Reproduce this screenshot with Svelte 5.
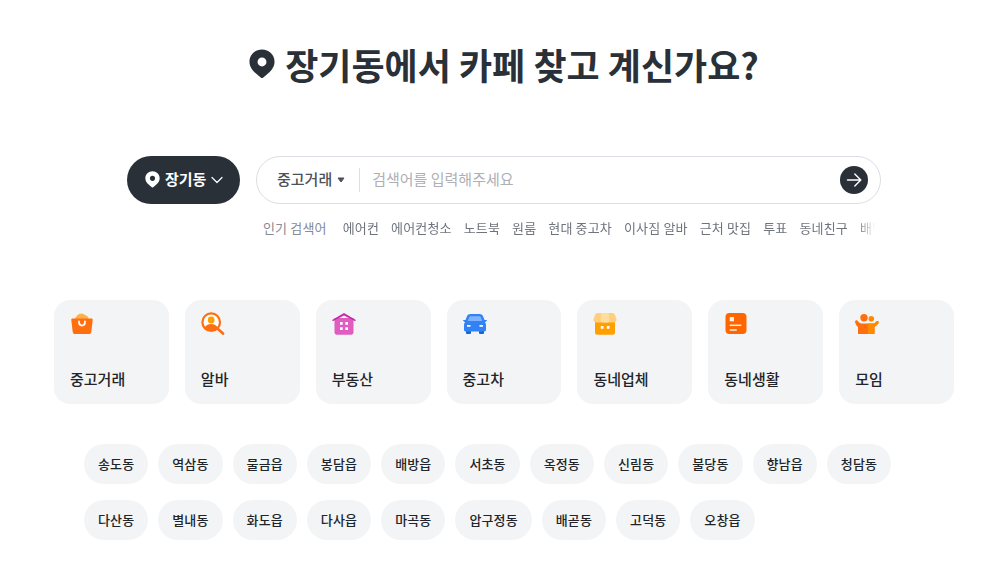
<script>
    const keywords = ["에어컨", "에어컨청소", "노트북", "원룸", "현대 중고차", "이사짐 알바", "근처 맛집", "투표", "동네친구", "배달 알바"];

    const categories = [
        {label: "중고거래", icon: "bag"},
        {label: "알바", icon: "job"},
        {label: "부동산", icon: "house"},
        {label: "중고차", icon: "car"},
        {label: "동네업체", icon: "shop"},
        {label: "동네생활", icon: "news"},
        {label: "모임", icon: "group"}
    ];

    const regions = [
        "송도동", "역삼동", "물금읍", "봉담읍", "배방읍", "서초동", "옥정동", "신림동", "불당동", "향남읍", "청담동",
        "다산동", "별내동", "화도읍", "다사읍", "마곡동", "압구정동", "배곧동", "고덕동", "오창읍"
    ];

    const pin = "M14 .5C6.600 .5 .5 6.200 .5 13.500c0 5.500 3.200 9.200 6.800 12.500 2 2 4.200 3.600 5.600 4.800.6.500 1.600.500 2.200 0 1.400-1.200 3.600-2.800 5.600-4.800 3.600-3.300 6.800-7 6.800-12.500C27.500 6.200 21.400 .5 14 .5zm0 8.500a4.800 4.800 0 1 1 0 9.600 4.800 4.800 0 0 1 0-9.600z";
</script>

<main class="page">
    <h1>
        <svg class="title-pin" viewBox="0 0 28 32" aria-hidden="true">
            <path fill-rule="evenodd" fill="#2a3038" d={pin}/>
        </svg>
        <span>장기동에서 카페 찾고 계신가요?</span>
    </h1>

    <div class="search-row">
        <button class="region">
            <svg class="region-pin" viewBox="0 0 28 32" aria-hidden="true">
                <path fill-rule="evenodd" fill="#fff" d={pin}/>
            </svg>
            <span>장기동</span>
            <svg class="chevron" viewBox="0 0 12 8" aria-hidden="true">
                <path d="M1 1.500l5 5 5-5" fill="none" stroke="#fff" stroke-width="1.200" stroke-linecap="round" stroke-linejoin="round"/>
            </svg>
        </button>

        <div class="search-box">
            <span class="scope">중고거래</span>
            <svg class="caret" viewBox="0 0 8 6" aria-hidden="true">
                <path d="M1 1h6L4 5z" fill="#4d5159" stroke="#4d5159" stroke-linejoin="round"/>
            </svg>
            <span class="divider"></span>
            <span class="placeholder">검색어를 입력해주세요</span>
            <span class="go">
                <svg viewBox="0 0 16 16" aria-hidden="true">
                    <path d="M1.500 8h13M8.800 2l6 6-6 6" fill="none" stroke="#fff" stroke-width="1.400" stroke-linecap="round" stroke-linejoin="round"/>
                </svg>
            </span>
        </div>
    </div>

    <div class="popular">
        <span class="popular-title">인기 검색어</span>
        <div class="keywords">
            {#each keywords as word}
                <span>{word}</span>
            {/each}
        </div>
    </div>

    <div class="cards">
        {#each categories as item}
            <div class="card">
                <svg class="card-icon" viewBox="0 0 24 24" aria-hidden="true">
                    {#if item.icon === "bag"}
                        <path d="M5 8c.3-3.500 3-6.500 6.500-6.500 1.500 0 2.500.8 3.500 1.500 2 .2 3.500 2 4 5z" fill="#ffb04d"/>
                        <path d="M2.500 6.500h19c.8 0 1.300.6 1.200 1.400l-1.400 12c-.2 1.200-1.100 2.100-2.300 2.100H5c-1.200 0-2.100-.9-2.300-2.100l-1.400-12c-.1-.8.400-1.400 1.200-1.400z" fill="#ff6f0f"/>
                        <path d="M9 9.500c0 2.600 1 4 3 4s3-1.400 3-4" fill="none" stroke="#fff" stroke-width="1.800" stroke-linecap="round"/>
                    {:else if item.icon === "job"}
                        <circle cx="10.200" cy="10.200" r="8.800" fill="#fff" stroke="#ff6f0f" stroke-width="2.200"/>
                        <circle cx="10.200" cy="8" r="3.400" fill="#ff9f00"/>
                        <path d="M3.800 15.500c1-2.200 3.400-3.500 6.400-3.500s5.400 1.300 6.400 3.500c-1.600 2-3.800 3-6.400 3s-4.800-1-6.400-3z" fill="#ff6f0f"/>
                        <path d="M17.500 17.500l4.500 4" stroke="#ff6f0f" stroke-width="2.800" stroke-linecap="round"/>
                    {:else if item.icon === "house"}
                        <path d="M2.500 6h19v14.500c0 1.200-1 2.200-2.200 2.200H4.700c-1.200 0-2.200-1-2.200-2.200z" fill="#e05cc0"/>
                        <path d="M12 1L.5 7.700c-.6.400-.2 1.300.5 1.300.3 0 .5-.1.700-.2L12 3.500l10.300 5.300c.2.100.4.200.7.200.7 0 1.100-.9.500-1.300z" fill="#c92aa8"/>
                        <path d="M8 10h2.700v2.700H8zM13.300 10H16v2.700h-2.700zM8 15.300h2.700V18H8zM13.300 15.300H16V18h-2.700z" fill="#fff"/>
                    {:else if item.icon === "car"}
                        <path d="M3 18h5v2.700c0 .7-.5 1.300-1.200 1.300H4.200c-.7 0-1.200-.6-1.200-1.300zM16 18h5v2.700c0 .7-.5 1.300-1.200 1.300h-2.600c-.7 0-1.200-.6-1.200-1.300z" fill="#1a62d6"/>
                        <path d="M7.500 2h9c1.700 0 2.900.9 3.500 2.300L21.500 8h2c.5 0 .6.500.3.800l-1.800 1.400c.6.700 1 1.600 1 2.600v5c0 1-.7 1.700-1.700 1.700H2.700C1.700 19.500 1 18.800 1 17.800v-5c0-1 .4-1.900 1-2.600L.2 8.800C-.1 8.500 0 8 .5 8h2L4 4.300C4.600 2.900 5.800 2 7.500 2z" fill="#3182f6"/>
                        <path d="M7.800 4.200h8.400c.8 0 1.400.4 1.700 1.100l1.200 3.200c.1.300-.1.500-.4.500H5.300c-.3 0-.5-.2-.4-.5l1.200-3.200c.3-.7.900-1.100 1.700-1.100z" fill="#7fb2ff"/>
                        <path d="M4 13h3.500v1.700H4zM16.500 13H20v1.700h-3.500z" fill="#fff"/>
                    {:else if item.icon === "shop"}
                        <path d="M2 7h20v13.500c0 1.300-1 2.300-2.300 2.300H4.300C3 22.800 2 21.800 2 20.500z" fill="#ff9f00"/>
                        <path d="M5 1h14c1.500 0 2.600.9 3.100 2.200L23.500 7c.4 2-1 3.500-2.800 3.500H3.300C1.500 10.500.1 9 .5 7l1.400-3.800C2.400 1.900 3.500 1 5 1z" fill="#ffcf7d"/>
                        <path d="M8.500 1h7l1 6.500c.2 1.700-1 3-2.500 3h-4c-1.500 0-2.700-1.300-2.500-3z" fill="#ffdd9e"/>
                        <path d="M7.800 14h2.700v2.700H7.800zM13.800 14h2.700v2.700h-2.700z" fill="#fff"/>
                    {:else if item.icon === "news"}
                        <rect x="1.500" y="1" width="21" height="21" rx="4" fill="#ff6600"/>
                        <rect x="5.700" y="5" width="4.300" height="4.300" fill="#fff" opacity=".9"/>
                        <path d="M5.700 13.300h11.600" stroke="#fff" stroke-width="1.500" opacity=".9"/>
                        <path d="M5.700 18h7" stroke="#fff" stroke-width="1.500" opacity=".9"/>
                    {:else}
                        <circle cx="9" cy="5.700" r="3.700" fill="#ff6f0f"/>
                        <circle cx="16.300" cy="6.700" r="2.800" fill="#ff8a00"/>
                        <path d="M.5 8.700c1-.7 2-.3 2.500.5 1 1.500 2.500 2.300 5 2.300h10c1.500 0 2.300-.6 2.800-1.500.6-1 1.600-1.200 2.500-.5.500.5.500 1.200.1 1.800-.8 1.500-2.200 2.900-3.900 3.400V22H3v-7C1.800 14.200.8 12.500.2 10.500 0 9.800 0 9.100.5 8.700z" fill="#ff6f0f"/>
                        <path d="M13 11.500h5c1.500 0 2.300-.6 2.800-1.500.6-1 1.600-1.200 2.500-.5.500.5.500 1.200.1 1.800-.8 1.500-2.200 2.900-3.900 3.400V22H13z" fill="#ff8a00"/>
                    {/if}
                </svg>
                <span>{item.label}</span>
            </div>
        {/each}
    </div>

    <div class="chips">
        {#each regions as region}
            <span class="chip">{region}</span>
        {/each}
    </div>
</main>

<style>
    :global(body) {
        margin: 0;
        background: #fff;
    }

    .page {
        box-sizing: border-box;
        width: 1001px;
        padding: 43px 0 0 7px;
        font-family: "Noto Sans CJK KR", "Noto Sans", sans-serif;
        color: #212529;
        overflow: hidden;
    }

    h1 {
        display: flex;
        align-items: center;
        justify-content: center;
        gap: 10px;
        margin: 0;
        height: 42px;
        font-size: 36px;
        font-weight: 700;
        line-height: 42px;
        color: #2a3038;
        white-space: nowrap;
    }

    .title-pin {
        width: 26px;
        height: 30px;
        flex: none;
    }

    .search-row {
        display: flex;
        justify-content: center;
        gap: 16px;
        margin-top: 71px;
    }

    .region {
        display: flex;
        align-items: center;
        gap: 5px;
        box-sizing: border-box;
        width: 113px;
        height: 48px;
        padding: 0 0 4px 18px;
        border: 0;
        border-radius: 24px;
        background: #2a3038;
        color: #fff;
        font: 700 15px "Noto Sans CJK KR", sans-serif;
    }

    .region-pin {
        width: 15px;
        height: 17px;
        flex: none;
        margin-top: 3px;
    }

    .chevron {
        width: 12px;
        height: 8px;
        flex: none;
        margin-top: 4px;
    }

    .search-box {
        display: flex;
        align-items: center;
        box-sizing: border-box;
        width: 625px;
        height: 48px;
        padding: 0 12px 0 20px;
        border: 1px solid #dcdee3;
        border-radius: 24px;
        background: #fff;
    }

    .scope {
        margin-bottom: 4px;
        font-size: 15px;
        font-weight: 500;
        color: #4d5159;
    }

    .caret {
        width: 8px;
        height: 6px;
        margin-left: 5px;
    }

    .divider {
        width: 1px;
        height: 24px;
        margin: 0 12px 0 14px;
        background: #dcdee3;
    }

    .placeholder {
        flex: 1;
        margin-bottom: 4px;
        font-size: 15px;
        color: #aeb0b6;
    }

    .go {
        display: flex;
        align-items: center;
        justify-content: center;
        width: 28px;
        height: 28px;
        border-radius: 50%;
        background: #2a3038;
    }

    .go svg {
        width: 16px;
        height: 16px;
    }

    .popular {
        display: flex;
        align-items: center;
        gap: 16px;
        width: 612px;
        height: 20px;
        margin: 13px 0 0 256px;
        font-size: 13px;
        letter-spacing: .16px;
        white-space: nowrap;
    }

    .popular-title {
        color: #868b94;
    }

    .keywords {
        display: flex;
        gap: 12px;
        flex: 1;
        overflow: hidden;
        color: #6e737c;
        mask-image: linear-gradient(to left, transparent 0, #000 18px);
    }

    .cards {
        display: grid;
        grid-template-columns: repeat(7, 1fr);
        gap: 16px;
        width: 900px;
        margin: 63px 0 0 47px;
    }

    .card {
        display: flex;
        flex-direction: column;
        justify-content: space-between;
        box-sizing: border-box;
        height: 104px;
        padding: 12px 16px 15px;
        border-radius: 16px;
        background: #f3f4f6;
        font-size: 15px;
        font-weight: 500;
        color: #212529;
    }

    .card-icon {
        width: 24px;
        height: 24px;
    }

    .chips {
        display: flex;
        flex-wrap: wrap;
        gap: 16px 10px;
        width: 840px;
        margin: 40px 0 0 77px;
    }

    .chip {
        display: flex;
        align-items: center;
        box-sizing: border-box;
        height: 40px;
        padding: 0 14px 2px;
        border-radius: 20px;
        background: #f3f4f6;
        font-size: 13px;
        font-weight: 500;
        letter-spacing: .13px;
        color: #212529;
    }
</style>
